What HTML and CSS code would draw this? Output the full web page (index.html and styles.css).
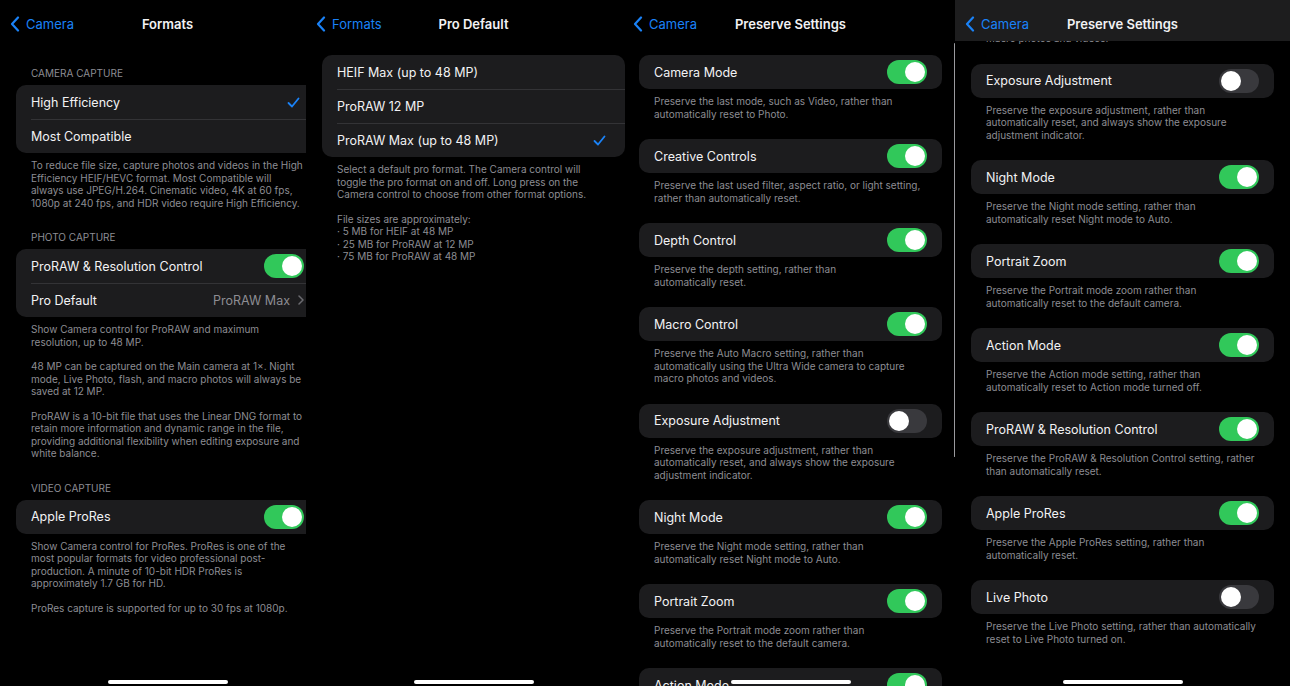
FILE: index.html
```html
<!DOCTYPE html>
<html lang="en">
<head>
    <meta charset="UTF-8">
    <meta name="viewport" content="width=device-width, initial-scale=1.0">
    <title>Camera Formats &amp; Preserve Settings</title>
    <link rel="stylesheet" href="styles.css">
</head>
<body>
    <div class="collage">

        <!-- Formats -->
        <div class="crop crop-formats">
            <div class="screen">
                <div class="nav">
                    <a class="back" href="#">
                        <svg class="back-icon" viewBox="0 0 10 16"><path d="M8 1.5 2 8l6 6.5"/></svg>
                        Camera
                    </a>
                    <div class="nav-title">Formats</div>
                    <div></div>
                </div>
                <div class="content">
                    <div class="group">
                        <div class="section-label">Camera Capture</div>
                        <div class="card">
                            <div class="row">High Efficiency
                                <svg class="check" viewBox="0 0 13 11"><path d="M1.5 6 5 9.5 11.5 1.5"/></svg>
                            </div>
                            <div class="row">Most Compatible</div>
                        </div>
                        <div class="note">
                            <p>To reduce file size, capture photos and videos in the High<br>Efficiency HEIF/HEVC format. Most Compatible will<br>always use JPEG/H.264. Cinematic video, 4K at 60 fps,<br>1080p at 240 fps, and HDR video require High Efficiency.</p>
                        </div>
                    </div>
                    <div class="group">
                        <div class="section-label">Photo Capture</div>
                        <div class="card">
                            <div class="row">ProRAW &amp; Resolution Control <span class="switch on"></span></div>
                            <div class="row">Pro Default
                                <span class="value">ProRAW Max
                                    <svg class="chevron" viewBox="0 0 6 10"><path d="M1 1l4 4-4 4"/></svg>
                                </span>
                            </div>
                        </div>
                        <div class="note">
                            <p>Show Camera control for ProRAW and maximum<br>resolution, up to 48 MP.</p>
                            <p>48 MP can be captured on the Main camera at 1×. Night<br>mode, Live Photo, flash, and macro photos will always be<br>saved at 12 MP.</p>
                            <p>ProRAW is a 10-bit file that uses the Linear DNG format to<br>retain more information and dynamic range in the file,<br>providing additional flexibility when editing exposure and<br>white balance.</p>
                        </div>
                    </div>
                    <div class="group">
                        <div class="section-label">Video Capture</div>
                        <div class="card">
                            <div class="row">Apple ProRes <span class="switch on"></span></div>
                        </div>
                        <div class="note">
                            <p>Show Camera control for ProRes. ProRes is one of the<br>most popular formats for video professional post-<br>production. A minute of 10-bit HDR ProRes is<br>approximately 1.7 GB for HD.</p>
                            <p>ProRes capture is supported for up to 30 fps at 1080p.</p>
                        </div>
                    </div>
                </div>
                <div class="home-bar"></div>
            </div>
        </div>

        <!-- Pro Default -->
        <div class="crop crop-pro">
            <div class="screen">
                <div class="nav">
                    <a class="back" href="#">
                        <svg class="back-icon" viewBox="0 0 10 16"><path d="M8 1.5 2 8l6 6.5"/></svg>
                        Formats
                    </a>
                    <div class="nav-title">Pro Default</div>
                    <div></div>
                </div>
                <div class="content">
                    <div class="card">
                        <div class="row">HEIF Max (up to 48 MP)</div>
                        <div class="row">ProRAW 12 MP</div>
                        <div class="row">ProRAW Max (up to 48 MP)
                            <svg class="check" viewBox="0 0 13 11"><path d="M1.5 6 5 9.5 11.5 1.5"/></svg>
                        </div>
                    </div>
                    <div class="note">
                        <p>Select a default pro format. The Camera control will<br>toggle the pro format on and off. Long press on the<br>Camera control to choose from other format options.</p>
                        <p>File sizes are approximately:<br>· 5 MB for HEIF at 48 MP<br>· 25 MB for ProRAW at 12 MP<br>· 75 MB for ProRAW at 48 MP</p>
                    </div>
                </div>
                <div class="home-bar"></div>
            </div>
        </div>

        <!-- Preserve Settings, top -->
        <div class="crop crop-preserve">
            <div class="screen">
                <div class="nav">
                    <a class="back" href="#">
                        <svg class="back-icon" viewBox="0 0 10 16"><path d="M8 1.5 2 8l6 6.5"/></svg>
                        Camera
                    </a>
                    <div class="nav-title">Preserve Settings</div>
                    <div></div>
                </div>
                <div class="content">
                    <div class="setting">
                        <div class="card"><div class="row">Camera Mode <span class="switch on"></span></div></div>
                        <div class="note">Preserve the last mode, such as Video, rather than<br>automatically reset to Photo.</div>
                    </div>
                    <div class="setting">
                        <div class="card"><div class="row">Creative Controls <span class="switch on"></span></div></div>
                        <div class="note">Preserve the last used filter, aspect ratio, or light setting,<br>rather than automatically reset.</div>
                    </div>
                    <div class="setting">
                        <div class="card"><div class="row">Depth Control <span class="switch on"></span></div></div>
                        <div class="note">Preserve the depth setting, rather than<br>automatically reset.</div>
                    </div>
                    <div class="setting">
                        <div class="card"><div class="row">Macro Control <span class="switch on"></span></div></div>
                        <div class="note">Preserve the Auto Macro setting, rather than<br>automatically using the Ultra Wide camera to capture<br>macro photos and videos.</div>
                    </div>
                    <div class="setting">
                        <div class="card"><div class="row">Exposure Adjustment <span class="switch"></span></div></div>
                        <div class="note">Preserve the exposure adjustment, rather than<br>automatically reset, and always show the exposure<br>adjustment indicator.</div>
                    </div>
                    <div class="setting">
                        <div class="card"><div class="row">Night Mode <span class="switch on"></span></div></div>
                        <div class="note">Preserve the Night mode setting, rather than<br>automatically reset Night mode to Auto.</div>
                    </div>
                    <div class="setting">
                        <div class="card"><div class="row">Portrait Zoom <span class="switch on"></span></div></div>
                        <div class="note">Preserve the Portrait mode zoom rather than<br>automatically reset to the default camera.</div>
                    </div>
                    <div class="setting">
                        <div class="card"><div class="row">Action Mode <span class="switch on"></span></div></div>
                        <div class="note">Preserve the Action mode setting, rather than<br>automatically reset to Action mode turned off.</div>
                    </div>
                </div>
                <div class="home-bar"></div>
            </div>
            <div class="scroll-indicator"></div>
        </div>

        <!-- Preserve Settings, scrolled -->
        <div class="crop crop-scrolled">
            <div class="screen">
                <div class="nav nav-solid">
                    <a class="back" href="#">
                        <svg class="back-icon" viewBox="0 0 10 16"><path d="M8 1.5 2 8l6 6.5"/></svg>
                        Camera
                    </a>
                    <div class="nav-title">Preserve Settings</div>
                    <div></div>
                </div>
                <div class="content content-scrolled">
                    <div class="setting">
                        <div class="card"><div class="row">Macro Control <span class="switch on"></span></div></div>
                        <div class="note">Preserve the Auto Macro setting, rather than<br>automatically using the Ultra Wide camera to capture<br>macro photos and videos.</div>
                    </div>
                    <div class="setting">
                        <div class="card"><div class="row">Exposure Adjustment <span class="switch"></span></div></div>
                        <div class="note">Preserve the exposure adjustment, rather than<br>automatically reset, and always show the exposure<br>adjustment indicator.</div>
                    </div>
                    <div class="setting">
                        <div class="card"><div class="row">Night Mode <span class="switch on"></span></div></div>
                        <div class="note">Preserve the Night mode setting, rather than<br>automatically reset Night mode to Auto.</div>
                    </div>
                    <div class="setting">
                        <div class="card"><div class="row">Portrait Zoom <span class="switch on"></span></div></div>
                        <div class="note">Preserve the Portrait mode zoom rather than<br>automatically reset to the default camera.</div>
                    </div>
                    <div class="setting">
                        <div class="card"><div class="row">Action Mode <span class="switch on"></span></div></div>
                        <div class="note">Preserve the Action mode setting, rather than<br>automatically reset to Action mode turned off.</div>
                    </div>
                    <div class="setting">
                        <div class="card"><div class="row">ProRAW &amp; Resolution Control <span class="switch on"></span></div></div>
                        <div class="note">Preserve the ProRAW &amp; Resolution Control setting, rather<br>than automatically reset.</div>
                    </div>
                    <div class="setting">
                        <div class="card"><div class="row">Apple ProRes <span class="switch on"></span></div></div>
                        <div class="note">Preserve the Apple ProRes setting, rather than<br>automatically reset.</div>
                    </div>
                    <div class="setting">
                        <div class="card"><div class="row">Live Photo <span class="switch"></span></div></div>
                        <div class="note">Preserve the Live Photo setting, rather than automatically<br>reset to Live Photo turned on.</div>
                    </div>
                </div>
                <div class="home-bar"></div>
            </div>
        </div>

    </div>
</body>
</html>
```

FILE: styles.css
```css
:root {
    --bg: #000;
    --card: #1c1c1e;
    --separator: #333336;
    --text: #f2f2f4;
    --muted: #8d8d93;
    --blue: #1a82f7;
    --green: #31c85a;
    --switch-off: #39393d;
}

* {
    box-sizing: border-box;
}

body {
    margin: 0;
    background: var(--bg);
    color: var(--text);
    font-family: 'Inter', 'Liberation Sans', sans-serif;
}

.collage {
    display: flex;
    height: 686px;
    overflow: hidden;
}

.crop {
    position: relative;
    flex: none;
    height: 686px;
    overflow: hidden;
}

.crop-formats { width: 306px; }
.crop-pro { width: 324px; }
.crop-preserve { width: 325px; }
.crop-scrolled { width: 335px; }

.screen {
    position: relative;
    width: 335px;
    height: 686px;
    overflow: hidden;
}

.crop-preserve .screen {
    margin-left: -7px;
}

/* navigation bar */
.nav {
    display: grid;
    grid-template-columns: 1fr auto 1fr;
    align-items: center;
    height: 48px;
    padding: 0 10px;
    font-size: 13px;
}

.nav-solid {
    position: absolute;
    top: 0;
    left: 0;
    right: 0;
    z-index: 2;
    height: 41px;
    padding-top: 7px;
    background: #1d1d1e;
}

.back {
    display: flex;
    align-items: center;
    gap: 6px;
    color: var(--blue);
    text-decoration: none;
}

.back-icon {
    width: 10px;
    height: 16px;
    fill: none;
    stroke: var(--blue);
    stroke-width: 2.2;
    stroke-linecap: round;
    stroke-linejoin: round;
}

.nav-title {
    font-weight: 600;
    text-align: center;
}

/* lists */
.content {
    padding: 7px 16px 0;
}

.content-scrolled {
    margin-top: -40px;
}

.section-label {
    margin: 22px 15px 6px;
    font-size: 10px;
    line-height: 12px;
    color: var(--muted);
    text-transform: uppercase;
}

.group:first-child .section-label {
    margin-top: 12px;
}

.card {
    background: var(--card);
    border-radius: 10px;
    overflow: hidden;
}

.row {
    position: relative;
    display: flex;
    align-items: center;
    height: 34px;
    padding: 0 15px;
    font-size: 12.5px;
}

.row + .row::before {
    content: '';
    position: absolute;
    top: 0;
    left: 15px;
    right: 0;
    border-top: 1px solid var(--separator);
}

.check {
    width: 13px;
    height: 11px;
    margin-left: auto;
    margin-right: 4px;
    fill: none;
    stroke: var(--blue);
    stroke-width: 1.8;
    stroke-linecap: round;
    stroke-linejoin: round;
}

.value {
    display: flex;
    align-items: center;
    gap: 8px;
    margin-left: auto;
    color: var(--muted);
}

.chevron {
    width: 6px;
    height: 10px;
    fill: none;
    stroke: #6b6b70;
    stroke-width: 1.5;
    stroke-linecap: round;
    stroke-linejoin: round;
}

.switch {
    position: relative;
    flex: none;
    width: 40px;
    height: 24px;
    margin-left: auto;
    border-radius: 12px;
    background: var(--switch-off);
}

.switch::after {
    content: '';
    position: absolute;
    top: 2px;
    left: 2px;
    width: 20px;
    height: 20px;
    border-radius: 50%;
    background: #fff;
}

.switch.on {
    background: var(--green);
}

.switch.on::after {
    left: 18px;
}

.note {
    padding: 6px 15px 0;
    font-size: 10px;
    line-height: 12.5px;
    color: var(--muted);
}

.note p {
    margin: 0 0 12px;
}

.note p:last-child {
    margin-bottom: 0;
}

.setting {
    margin-bottom: 19px;
}

.home-bar {
    position: absolute;
    left: 50%;
    bottom: 2px;
    width: 120px;
    height: 4px;
    margin-left: -60px;
    border-radius: 2px;
    background: #fff;
    z-index: 3;
}

.scroll-indicator {
    position: absolute;
    top: 43px;
    right: 0;
    width: 1.5px;
    height: 414px;
    border-radius: 1px;
    background: #9a9a9e;
}
```
